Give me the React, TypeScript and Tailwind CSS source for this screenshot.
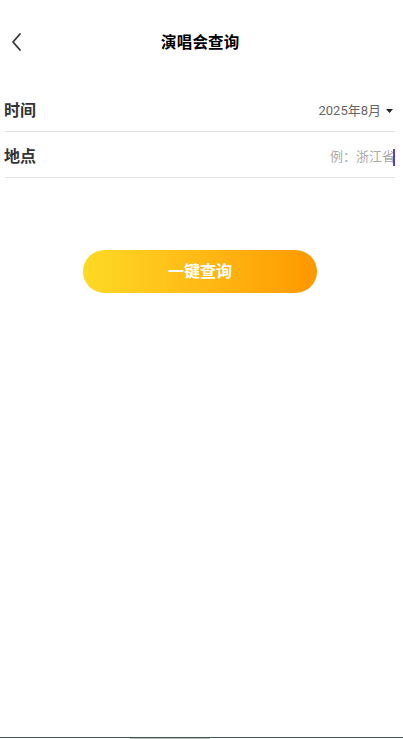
import React from "react";

export default function App() {
  const font = { fontFamily: '"Roboto", "Noto Sans CJK SC", sans-serif' };
  return (
    <div
      className="w-[403px] h-[739px] bg-white flex flex-col overflow-hidden"
      style={font}
    >
      <div className="relative h-[86px] flex items-center pl-[161px] pt-[1px]">
        <button className="absolute left-[8px] top-[31px] w-[16px] h-[22px] flex items-center justify-center">
          <svg width="12" height="20" viewBox="0 0 12 20" fill="none">
            <path d="M10 2 L3 10 L10 18" stroke="#333" strokeWidth="1.8" strokeLinecap="round" strokeLinejoin="round" />
          </svg>
        </button>
        <div className="text-[15.5px] font-bold text-black tracking-[0.2px]">演唱会查询</div>
      </div>

      <div className="ml-[5px] mr-[8px] h-[46px] pt-[4px] border-b border-[#e0e0e0] flex items-center justify-between">
        <span className="text-[16px] font-bold text-[#333] -ml-[1px]">时间</span>
        <span className="flex items-center gap-[5px] pr-[2px] pt-[1px]">
          <span className="text-[13px] text-[#666]">2025年8月</span>
          <svg width="7" height="4" viewBox="0 0 7 4">
            <path d="M0 0 L7 0 L3.5 4 Z" fill="#222" />
          </svg>
        </span>
      </div>

      <div className="ml-[5px] mr-[8px] h-[46px] pt-[4px] border-b border-[#e0e0e0] flex items-center justify-between">
        <span className="text-[16px] font-bold text-[#333] -ml-[1px]">地点</span>
        <span className="flex items-center pt-[1px]">
          <span className="text-[13px] text-[#aaa]">例：浙江省</span>
          <span className="w-[2px] h-[17px] bg-[#5b3cc4] -ml-[2px]" />
        </span>
      </div>

      <div className="flex mt-[72px] pl-[83px]">
        <button className="w-[234px] h-[43px] rounded-full bg-gradient-to-r from-[#fdda24] to-[#ff9800] text-white text-[16px] font-bold">
          一键查询
        </button>
      </div>

      <div className="flex-1" />
      <div className="h-[2px] border-t border-[#3c5a55] flex">
        <div className="ml-[130px] w-[80px] h-[1px] bg-[#bbb]" />
      </div>
    </div>
  );
}
